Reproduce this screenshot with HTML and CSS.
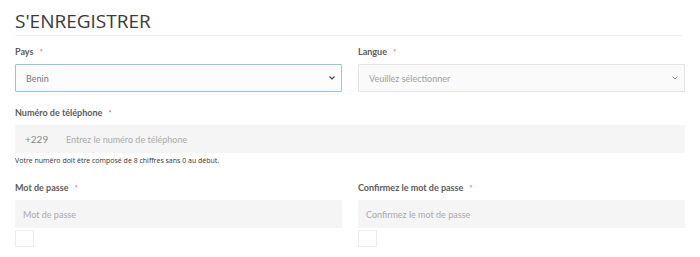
FILE: index.html
```html
<!DOCTYPE html>
<html lang="fr">
<head>
    <meta charset="UTF-8">
    <meta name="viewport" content="width=device-width, initial-scale=1.0">
    <title>S'enregistrer</title>
    <link rel="stylesheet" href="styles.css">
</head>
<body>

    <div class="page">
        <h2 class="title">S'ENREGISTRER</h2>

        <form class="register-form">
            <!-- Pays / Langue -->
            <div class="row">
                <div class="field">
                    <label for="pays">Pays <span class="req">*</span></label>
                    <div class="select-wrap">
                        <select id="pays" class="select focused">
                            <option>Benin</option>
                        </select>
                        <svg class="chevron" width="8" height="6" viewBox="0 0 8 6"><path d="M1.5 1.5 L4 4 L6.5 1.5" fill="none" stroke="#444" stroke-width="1.2"/></svg>
                    </div>
                </div>
                <div class="field">
                    <label for="langue">Langue <span class="req">*</span></label>
                    <div class="select-wrap">
                        <select id="langue" class="select muted">
                            <option>Veuillez sélectionner</option>
                        </select>
                        <svg class="chevron" width="8" height="6" viewBox="0 0 8 6"><path d="M1.5 1.5 L4 4 L6.5 1.5" fill="none" stroke="#888" stroke-width="1"/></svg>
                    </div>
                </div>
            </div>

            <!-- Téléphone -->
            <div class="field phone-field">
                <label for="phone">Numéro de téléphone <span class="req">*</span></label>
                <div class="phone-input">
                    <span class="prefix">+229</span>
                    <input type="text" id="phone" placeholder="Entrez le numéro de téléphone">
                </div>
                <p class="help">Votre numéro doit être composé de 8 chiffres sans 0 au début.</p>
            </div>

            <!-- Mot de passe -->
            <div class="row">
                <div class="field">
                    <label for="password">Mot de passe <span class="req">*</span></label>
                    <input type="password" id="password" class="input" placeholder="Mot de passe">
                    <div class="strength"></div>
                </div>
                <div class="field">
                    <label for="password2">Confirmez le mot de passe <span class="req">*</span></label>
                    <input type="password" id="password2" class="input" placeholder="Confirmez le mot de passe">
                    <div class="strength"></div>
                </div>
            </div>
        </form>
    </div>

</body>
</html>
```

FILE: styles.css
```css
body {
    margin: 0;
    padding: 0;
    background-color: #fff;
    color: #333;
    font-family: Lato, "Open Sans", sans-serif;
}

.page {
    padding: 0 15px;
}

.title {
    margin: 0;
    padding: 9px 0 2px;
    font-family: "Open Sans", sans-serif;
    font-weight: 400;
    font-size: 19px;
    line-height: 24px;
    color: #3a3a3a;
    border-bottom: 1px solid #eee;
    margin-right: 3px;
}

.register-form {
    padding-top: 10px;
}

.row {
    display: grid;
    grid-template-columns: 1fr 1fr;
    column-gap: 16px;
}

.field label {
    display: block;
    font-size: 9px;
    line-height: 12px;
    font-weight: bold;
    color: #5a5a5a;
    margin-bottom: 6px;
}

.req {
    color: #e8638f;
    font-size: 7px;
    margin-left: 4px;
}

.select-wrap {
    position: relative;
}

.select {
    width: 100%;
    height: 28px;
    padding: 0 10px;
    font-family: Lato, sans-serif;
    font-size: 9px;
    appearance: none;
    -webkit-appearance: none;
    border-radius: 1px;
    outline: none;
}

.select.focused {
    border: 1px solid #86cedb;
    background-color: #fcfcfc;
    color: #777;
}

.select.muted {
    border: 1px solid #e4e4e4;
    background-color: #fafafa;
    color: #a0a0a0;
}

.chevron {
    position: absolute;
    right: 6px;
    top: 11px;
}

.phone-field {
    margin-top: 15px;
}

.phone-input {
    display: flex;
    align-items: center;
    height: 28px;
    background-color: #f5f5f5;
    border-radius: 1px;
}

.prefix {
    padding-left: 10px;
    width: 41px;
    font-size: 10px;
    color: #888;
}

.phone-input input {
    flex: 1;
    border: none;
    background: transparent;
    font-family: Lato, sans-serif;
    font-size: 9px;
    outline: none;
    padding: 0;
}

.help {
    margin: 3px 0 0;
    font-size: 7px;
    line-height: 10px;
    color: #333;
    font-family: "Open Sans", sans-serif;
}

.phone-field + .row {
    margin-top: 16px;
}

.input {
    display: block;
    width: 100%;
    height: 28px;
    box-sizing: border-box;
    border: none;
    background-color: #f5f5f5;
    padding: 0 8px;
    font-family: Lato, sans-serif;
    font-size: 9px;
    border-radius: 1px;
    outline: none;
}

::placeholder {
    color: #aaa;
}

.strength {
    width: 19px;
    height: 17px;
    margin-top: 2px;
    border: 1px solid #ececec;
    box-sizing: border-box;
}
```
